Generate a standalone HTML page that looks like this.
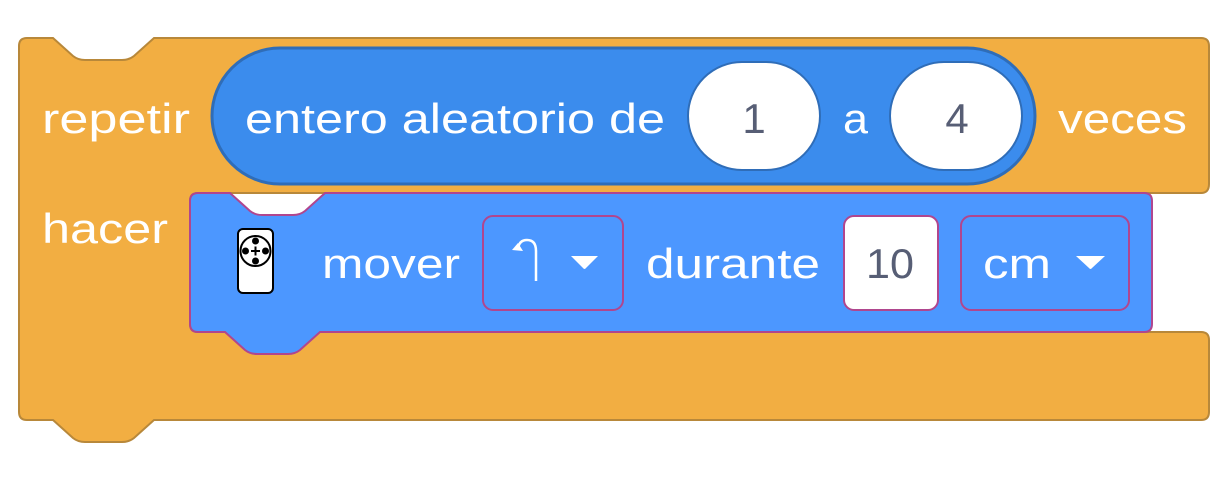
<!DOCTYPE html>
<html><head><style>
html,body{margin:0;padding:0;background:#fff;}
svg text{font-family:"Liberation Sans",sans-serif;font-size:42px;fill:#fff;}
</style></head><body>
<svg width="1230" height="474" viewBox="0 0 1230 474" xmlns="http://www.w3.org/2000/svg">
<path d="M27 38 H53 L73 56 Q78 60 85 60 H122 Q129 60 134 56 L154 38 H1201 Q1209 38 1209 46 V184 Q1209 193 1201 193 H198 Q190 193 190 201 V324 Q190 332 198 332 H1201 Q1209 332 1209 340 V412 Q1209 420 1201 420 H154 L134 438 Q129 442 122 442 H85 Q78 442 73 438 L53 420 H27 Q19 420 19 412 V46 Q19 38 27 38 Z" fill="#f2ae42" stroke="#b8883a" stroke-width="2"/>
<rect x="212" y="48" width="823" height="136" rx="68" fill="#3b8ced" stroke="#2f6db8" stroke-width="3"/>
<rect x="688" y="62" width="132" height="108" rx="54" fill="#fff" stroke="#2f6db8" stroke-width="2"/>
<rect x="890" y="62" width="132" height="108" rx="54" fill="#fff" stroke="#2f6db8" stroke-width="2"/>
<text x="42" y="133" textLength="148" lengthAdjust="spacingAndGlyphs">repetir</text>
<text x="245" y="133" textLength="420" lengthAdjust="spacingAndGlyphs">entero aleatorio de</text>
<text x="754" y="133" text-anchor="middle" style="fill:#575e75">1</text>
<text x="843" y="133" textLength="25" lengthAdjust="spacingAndGlyphs">a</text>
<text x="957" y="133" text-anchor="middle" style="fill:#575e75">4</text>
<text x="1058" y="133" textLength="129" lengthAdjust="spacingAndGlyphs">veces</text>
<text x="42" y="243" textLength="126" lengthAdjust="spacingAndGlyphs">hacer</text>
<path d="M198 193 H230 L250 211 Q255 215 262 215 H293 Q300 215 305 211 L325 193 H1144 Q1152 193 1152 201 V324 Q1152 332 1144 332 H320 L300 350 Q295 354 288 354 H257 Q250 354 245 350 L225 332 H198 Q190 332 190 324 V201 Q190 193 198 193 Z" fill="#4c97ff" stroke="#b0468e" stroke-width="2"/>
<rect x="238" y="229" width="35" height="64" rx="5" fill="#fff" stroke="#000" stroke-width="2"/>
<circle cx="255.5" cy="251" r="15" fill="#fff" stroke="#000" stroke-width="2"/>
<circle cx="255.5" cy="241" r="3.5" fill="#000"/><circle cx="255.5" cy="261" r="3.5" fill="#000"/>
<circle cx="245.5" cy="251" r="3.5" fill="#000"/><circle cx="265.5" cy="251" r="3.5" fill="#000"/>
<path d="M251 251 H260 M255.5 246.5 V255.5" stroke="#000" stroke-width="2"/>
<text x="322" y="278" textLength="138" lengthAdjust="spacingAndGlyphs">mover</text>
<rect x="483" y="216" width="140" height="94" rx="10" fill="none" stroke="#b0468e" stroke-width="2"/>
<path d="M536 281 V251 Q536 240 527 240 Q519 240 518 249" fill="none" stroke="#fff" stroke-width="2.5"/>
<path d="M512 250 L518 243 L523 251 Z" fill="#fff"/>
<path d="M571 256 H598 L586 268 Q584.5 270 583 268 Z" fill="#fff"/>
<text x="646" y="278" textLength="174" lengthAdjust="spacingAndGlyphs">durante</text>
<rect x="844" y="216" width="94" height="94" rx="10" fill="#fff" stroke="#b0468e" stroke-width="2"/>
<text x="866" y="278" textLength="48" lengthAdjust="spacingAndGlyphs" style="fill:#575e75">10</text>
<rect x="961" y="216" width="168" height="94" rx="10" fill="none" stroke="#b0468e" stroke-width="2"/>
<text x="983" y="278" textLength="68" lengthAdjust="spacingAndGlyphs">cm</text>
<path d="M1076 256 H1105 L1092 268 Q1090.5 270 1089 268 Z" fill="#fff"/>
</svg>
</body></html>
